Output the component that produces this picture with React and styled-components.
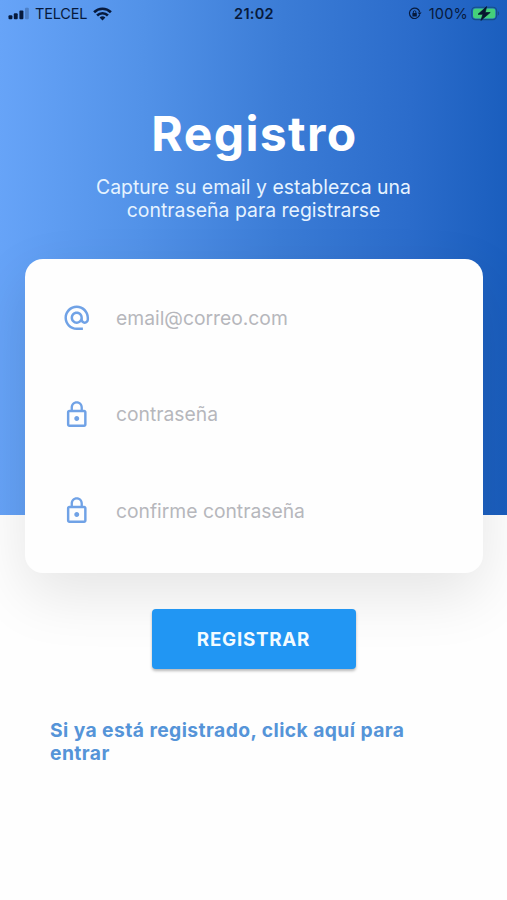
import React, { useState } from "react";
import styled, { createGlobalStyle } from "styled-components";
import { MdAlternateEmail, MdLockOutline } from "react-icons/md";

const GlobalStyle = createGlobalStyle`
   * {
      box-sizing: border-box;
   }
   body {
      margin: 0;
      background: #fefefe;
      font-family: Inter, "Liberation Sans", sans-serif;
   }
`;

const Page = styled.div`
   display: flex;
   flex-direction: column;
   height: 900px;
   overflow: hidden;
   background: linear-gradient(91deg, #67a4f8 0%, #5292e8 28%, #3b7cd6 55%, #2b6ccb 80%, #195dbd 100%) no-repeat;
   background-size: 100% 515px;
`;

const StatusBar = styled.header`
   display: grid;
   grid-template-columns: 1fr auto 1fr;
   align-items: center;
   height: 27px;
   padding: 0 7px 0 8px;
   color: #071a3c;
`;

const StatusGroup = styled.div`
   display: flex;
   align-items: center;
   justify-content: ${(props) => (props.$end ? "flex-end" : "flex-start")};
   font-size: 14.5px;
   letter-spacing: ${(props) => (props.$end ? "0.2px" : "-0.2px")};

   svg {
      display: block;
      flex-shrink: 0;
   }
`;

const Carrier = styled.span`
   margin: 0 6px 0 6px;
`;

const Percent = styled.span`
   margin: 0 3px 0 7px;
`;

const Clock = styled.time`
   font-size: 14.5px;
   font-weight: 600;
   letter-spacing: 0.3px;
`;

const Title = styled.h1`
   margin: 78px 0 0;
   padding-left: 2px;
   color: #fff;
   font-size: 48px;
   font-weight: 700;
   line-height: 57px;
   letter-spacing: 1.4px;
   text-align: center;
`;

const Subtitle = styled.p`
   margin: 14px auto 0;
   width: 330px;
   color: #e6f3ff;
   font-size: 19.4px;
   line-height: 23.3px;
   letter-spacing: 0.02px;
   text-align: center;
`;

const Card = styled.form`
   display: flex;
   flex-direction: column;
   height: 314px;
   margin: 36px 24px 0 25px;
   padding: 11px 38px 0 37px;
   border-radius: 18px;
   background: #fefefe;
   box-shadow: 0 22px 60px rgba(0, 0, 0, 0.1);
`;

const Field = styled.label`
   display: flex;
   align-items: center;
   gap: 24.5px;
   height: 96.6px;
   color: #70a2e6;

   svg {
      flex-shrink: 0;
   }
`;

const Input = styled.input`
   flex: 1;
   min-width: 0;
   padding: 0;
   border: 0;
   outline: none;
   background: transparent;
   color: #333;
   font: 400 19.3px Inter, "Liberation Sans", sans-serif;

   &::placeholder {
      color: #b6b7bc;
      opacity: 1;
   }
`;

const SubmitButton = styled.button`
   align-self: center;
   width: 204px;
   height: 60px;
   margin: 36.5px 0 0;
   border: 0;
   border-radius: 4px;
   background: #2196f3;
   box-shadow: 0 2px 3px rgba(0, 0, 0, 0.28);
   color: #f2fbff;
   font: 700 18.8px Inter, "Liberation Sans", sans-serif;
   letter-spacing: 0.75px;
`;

const LoginLink = styled.a`
   width: 390px;
   margin: 50px 0 0 50px;
   color: #5594d8;
   font-size: 19.3px;
   font-weight: 700;
   line-height: 23.3px;
   letter-spacing: 0.42px;
`;

const SignalIcon = () => (
   <svg width="21" height="13" viewBox="0 0 21 13" fill="currentColor">
      <rect x="0.5" y="8.3" width="3.9" height="4" rx="1" />
      <rect x="5.8" y="6.3" width="3.9" height="6" rx="1" />
      <rect x="11.4" y="3.5" width="4" height="8.8" rx="1" />
      <rect x="17" y="0.8" width="3.8" height="11.5" rx="1" opacity="0.25" />
   </svg>
);

const WifiIcon = () => (
   <svg width="19" height="14" viewBox="0 0 19 14" fill="none" stroke="currentColor" strokeWidth="2.6">
      <path d="M1.1 5.2a12 12 0 0 1 16.8 0" />
      <path d="M4.1 8.5a7.7 7.7 0 0 1 10.8 0" />
      <path d="M9.5 13.4 6.6 10.6a4.1 4.1 0 0 1 5.8 0Z" fill="currentColor" stroke="none" />
   </svg>
);

const RotationLockIcon = () => (
   <svg width="14" height="13" viewBox="0 0 14 13" fill="none" stroke="currentColor" strokeWidth="1.2">
      <path d="M11.6 7.9A5.2 5.2 0 1 1 11.7 5" />
      <path d="M9.6 5.4h4l-2 2.6Z" fill="currentColor" stroke="none" />
      <rect x="4.4" y="5.9" width="4.4" height="3.5" rx="0.5" fill="currentColor" stroke="none" />
      <path d="M5.3 6.2V5a1.3 1.3 0 0 1 2.6 0v1.2" strokeWidth="0.9" />
   </svg>
);

const BatteryIcon = () => (
   <svg width="29" height="15" viewBox="0 0 29 15">
      <rect x="0.8" y="1.2" width="24.8" height="12.4" rx="3.6" fill="none" stroke="#174f85" strokeWidth="1.1" />
      <path d="M26.8 5.2c1.8.4 1.8 4 0 4.4Z" fill="#174f85" />
      <rect x="2" y="2.4" width="22.4" height="10" rx="2.4" fill="#45d07a" />
      <path d="M15.6 0.6 7 8.3h4.9L9.9 14.4 19.2 6.5H14.2Z" fill="#08162f" stroke="#08162f" strokeWidth="0.7" />
   </svg>
);

const fields = [
   { name: "email", type: "email", placeholder: "email@correo.com", Icon: MdAlternateEmail },
   { name: "password", type: "password", placeholder: "contraseña", Icon: MdLockOutline },
   { name: "confirm", type: "password", placeholder: "confirme contraseña", Icon: MdLockOutline },
];

const App = () => {
   const [values, setValues] = useState({ email: "", password: "", confirm: "" });

   return (
      <>
         <GlobalStyle />
         <Page>
            <StatusBar>
               <StatusGroup>
                  <SignalIcon />
                  <Carrier>TELCEL</Carrier>
                  <WifiIcon />
               </StatusGroup>
               <Clock>21:02</Clock>
               <StatusGroup $end>
                  <RotationLockIcon />
                  <Percent>100%</Percent>
                  <BatteryIcon />
               </StatusGroup>
            </StatusBar>
            <Title>Registro</Title>
            <Subtitle>
               Capture su email y establezca una contraseña para registrarse
            </Subtitle>
            <Card id="register" onSubmit={(e) => e.preventDefault()}>
               {fields.map(({ name, type, placeholder, Icon }) => (
                  <Field key={name}>
                     <Icon size={29.5} />
                     <Input
                        type={type}
                        placeholder={placeholder}
                        value={values[name]}
                        onChange={(e) => setValues({ ...values, [name]: e.target.value })}
                     />
                  </Field>
               ))}
            </Card>
            <SubmitButton type="submit" form="register">
               REGISTRAR
            </SubmitButton>
            <LoginLink>Si ya está registrado, click aquí para entrar</LoginLink>
         </Page>
      </>
   );
};

export default App;
